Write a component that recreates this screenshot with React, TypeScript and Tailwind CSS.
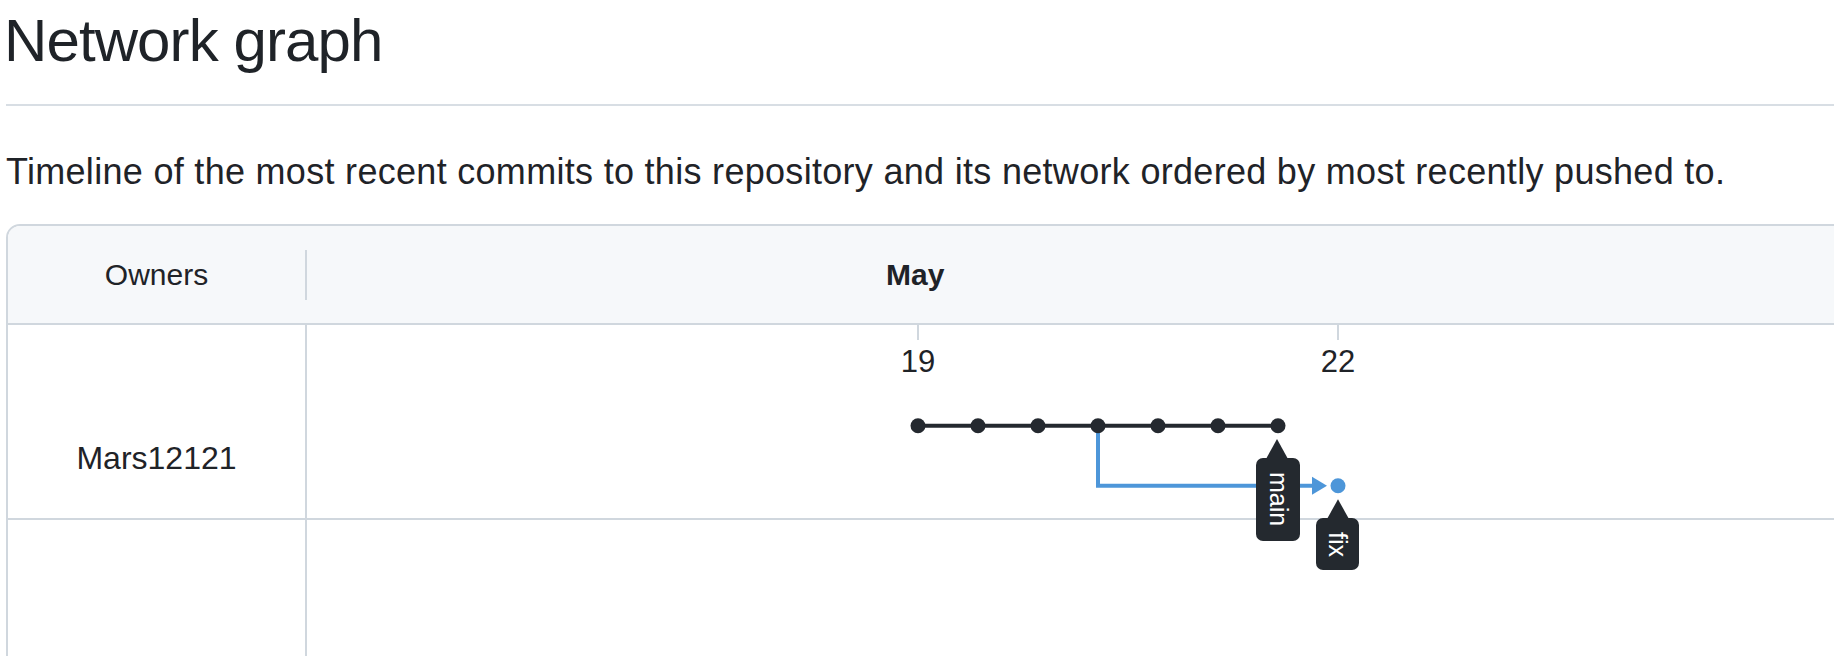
import React from "react";

const DOTS = [611, 671, 731, 791, 851, 911, 971];
const DARK = "#24292f";
const BLUE = "#4d96d9";

function Graph() {
  return (
    <div className="pointer-events-none absolute left-[299px] top-0 h-[340px] w-[1200px]">
      <svg width="1200" height="340" className="absolute left-0 top-0 overflow-visible">
        <rect x="610" y="0" width="2" height="15" fill="#d0d7de" />
        <rect x="1030" y="0" width="2" height="15" fill="#d0d7de" />
        <path d="M791 100.7 V160.7 H1008" stroke={BLUE} strokeWidth="4" fill="none" />
        <polygon points="1005,151.7 1020,160.7 1005,169.7" fill={BLUE} />
        <circle cx="1031" cy="160.7" r="7.5" fill={BLUE} />
        <line x1="611" y1="100.7" x2="971" y2="100.7" stroke={DARK} strokeWidth="4" />
        {DOTS.map((x) => (
          <circle key={x} cx={x} cy="100.7" r="7.5" fill={DARK} />
        ))}
        <polygon points="970,114 959,134 981,134" fill={DARK} />
        <polygon points="1031,174.3 1020,194 1042,194" fill={DARK} />
      </svg>
      <div className="absolute left-[581px] top-[21px] w-[60px] text-center text-[31px] leading-[31px]">19</div>
      <div className="absolute left-[1001px] top-[21px] w-[60px] text-center text-[31px] leading-[31px]">22</div>
      <div className="absolute left-[949px] top-[133px] flex h-[83px] w-[44px] items-center justify-center rounded-[7px] bg-[#24292f] text-white">
        <span className="text-[25px] leading-none [writing-mode:vertical-rl]">main</span>
      </div>
      <div className="absolute left-[1009px] top-[193px] flex h-[52px] w-[43px] items-center justify-center rounded-[7px] bg-[#24292f] text-white">
        <span className="text-[25px] leading-none [writing-mode:vertical-rl]">fix</span>
      </div>
    </div>
  );
}

export default function App() {
  return (
    <div className="h-[656px] w-[1834px] overflow-hidden bg-white pl-[6px] font-['Liberation_Sans',Arial,sans-serif] text-[#1f2328]">
      <div className="border-b-2 border-[#d8dee4] pb-[33px] pt-[11px]">
        <h1 className="ml-[-2px] text-[60px] font-normal leading-[60px] tracking-[-0.9px]">Network graph</h1>
      </div>
      <p className="mt-[48px] text-[36px] leading-[36px] tracking-[0.3px]">
        Timeline of the most recent commits to this repository and its network ordered by most recently pushed to.
      </p>
      <div className="mt-[34px] w-[1900px] overflow-hidden rounded-tl-[14px] border-2 border-[#d0d7de]">
        <div className="flex h-[99px] items-center border-b-2 border-[#d0d7de] bg-[#f6f8fa]">
          <div className="w-[297px] text-center text-[30px]">Owners</div>
          <div className="h-[50px] w-[2px] bg-[#d0d7de]" />
          <div className="pl-[579px] text-[30px] font-bold">May</div>
        </div>
        <div className="relative">
          <div className="flex h-[195px] border-b-2 border-[#d0d7de]">
            <div className="w-[299px] border-r-2 border-[#d0d7de] pt-[117px] text-center text-[32px] leading-[32px]">
              Mars12121
            </div>
            <div className="flex-1" />
          </div>
          <div className="flex h-[200px]">
            <div className="w-[299px] border-r-2 border-[#d0d7de]" />
            <div className="flex-1" />
          </div>
          <Graph />
        </div>
      </div>
    </div>
  );
}
